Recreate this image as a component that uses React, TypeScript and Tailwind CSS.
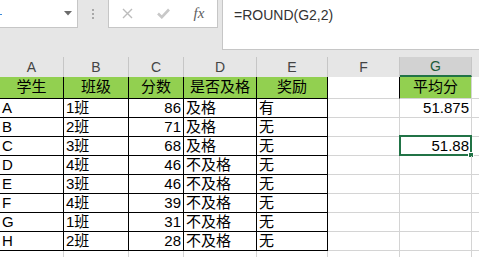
import React from "react";

type Row = string[];

const rows: Row[] = [
  ["A", "1班", "86", "及格", "有"],
  ["B", "2班", "71", "及格", "无"],
  ["C", "3班", "68", "及格", "无"],
  ["D", "4班", "46", "不及格", "无"],
  ["E", "3班", "46", "不及格", "无"],
  ["F", "4班", "39", "不及格", "无"],
  ["G", "1班", "31", "不及格", "无"],
  ["H", "2班", "28", "不及格", "无"],
];

const widths = ["w-[64px]", "w-[65px]", "w-[55px]", "w-[73px]", "w-[71px]", "w-[72px]", "w-[72px]", "w-[40px]"];
// H 列只露出一小截，字母不在画面内
const letters = ["A", "B", "C", "D", "E", "F", "G", ""];
const titles = ["学生", "班级", "分数", "是否及格", "奖励"];

// 平均分 column, keyed by data row index
const avg: Record<number, string> = { 0: "51.875", 2: "51.88" };

function XIcon() {
  return (
    <svg width="11" height="11" viewBox="0 0 11 11">
      <path d="M1 1 L10 10 M10 1 L1 10" stroke="#bcbcbc" strokeWidth="1.4" fill="none" />
    </svg>
  );
}

function CheckIcon() {
  return (
    <svg width="13" height="11" viewBox="0 0 13 11">
      <path d="M1 5.5 L4.8 9.2 L12 1.5" stroke="#c8c8c8" strokeWidth="2.6" fill="none" />
    </svg>
  );
}

function Toolbar() {
  return (
    <div className="h-[57px] bg-[#e6e6e6] flex items-start">
      {/* 名称框 */}
      <div className="relative w-[78px] h-[28px] bg-white border-r border-b border-[#c6c6c6] flex items-center justify-end pr-[5px]">
        <span className="absolute left-0 top-[14px] w-[2px] h-[1px] bg-[#3b8bd9]" />
        <svg width="8" height="5" viewBox="0 0 8 5">
          <path d="M0 0 L8 0 L4 4.5 Z" fill="#6b6b6b" />
        </svg>
      </div>
      <div className="w-[30px] h-[28px] flex flex-col items-center pt-[9px] gap-[2px]">
        <span className="w-[2px] h-[2px] bg-[#a8a8a8]" />
        <span className="w-[2px] h-[2px] bg-[#a8a8a8]" />
        <span className="w-[2px] h-[2px] bg-[#a8a8a8]" />
      </div>
      {/* 取消 / 输入 / 插入函数 */}
      <div className="w-[110px] h-[28px] bg-white border-l border-r border-b border-[#c6c6c6] flex items-center pl-[8px] gap-[16px]">
        <div className="w-[20px] flex justify-center"><XIcon /></div>
        <div className="w-[20px] flex justify-center"><CheckIcon /></div>
        <div className="w-[20px] flex justify-center font-['Liberation_Serif',serif] italic text-[15px] text-[#5e5e5e] leading-none">fx</div>
      </div>
      <div className="w-[4px]" />
      {/* 编辑栏 */}
      <div className="flex-1 h-[50px] bg-white border-l border-b border-[#c6c6c6] pl-[11px] pt-[6px] text-[14px] leading-[18px] text-[#333]">
        =ROUND(G2,2)
      </div>
    </div>
  );
}

function ColumnHeaders() {
  return (
    <div className="h-[20px] flex bg-[#e6e6e6] text-[14px] text-[#444]">
      {letters.map((l, i) => (
        <div
          key={i}
          className={`${widths[i]} shrink-0 h-full flex items-center justify-center border-r ${
            i === 6 ? "bg-[#d2d2d2] border-b-2 border-b-[#217346] border-r-[#c6c6c6] text-[#1d5c3a]" : "border-[#c6c6c6]"
          }`}
        >
          {l}
        </div>
      ))}
    </div>
  );
}

function TitleRow() {
  return (
    <div className="h-[22px] flex text-[15px] text-black">
      {titles.map((t, i) => (
        <div key={t} className={`${widths[i]} shrink-0 bg-[#92d050] border-r border-b border-black flex items-center justify-center`}>
          {t}
        </div>
      ))}
      <div className={`${widths[5]} shrink-0 border-r border-r-black border-b border-b-[#d4d4d4]`} />
      <div className={`${widths[6]} shrink-0 bg-[#92d050] border-r border-b border-[#d4d4d4] flex items-center justify-center`}>
        平均分
      </div>
      <div className={`${widths[7]} shrink-0 border-b border-[#d4d4d4]`} />
    </div>
  );
}

function DataRow({ row, index }: { row: Row; index: number }) {
  const value = avg[index];
  const selected = index === 2;
  return (
    <div className="h-[19px] flex text-[15px] text-black leading-[18px]">
      <div className={`${widths[0]} shrink-0 border-r border-b border-black pl-[2px] flex items-center`}>{row[0]}</div>
      <div className={`${widths[1]} shrink-0 border-r border-b border-black pl-[2px] flex items-center`}>{row[1]}</div>
      <div className={`${widths[2]} shrink-0 border-r border-b border-black pr-[2px] flex items-center justify-end`}>{row[2]}</div>
      <div className={`${widths[3]} shrink-0 border-r border-b border-black pl-[2px] flex items-center`}>{row[3]}</div>
      <div className={`${widths[4]} shrink-0 border-r border-b border-black pl-[2px] flex items-center`}>{row[4]}</div>
      <div className={`${widths[5]} shrink-0 border-r border-b border-[#d4d4d4]`} />
      <div className={`${widths[6]} shrink-0 relative border-r border-b border-[#d4d4d4] pr-[2px] flex items-center justify-end`}>
        {value}
        {selected && (
          <>
            <span className="absolute -left-[1px] -top-[2px] -right-[1px] -bottom-[1px] border-2 border-[#217346]" />
            <span className="absolute -right-[3px] -bottom-[3px] w-[6px] h-[6px] bg-[#217346] border border-white" />
          </>
        )}
      </div>
      <div className={`${widths[7]} shrink-0 border-b border-[#d4d4d4]`} />
    </div>
  );
}

function TailRow() {
  return (
    <div className="h-[19px] flex">
      {widths.map((w, i) => (
        <div key={i} className={`${w} shrink-0 ${i < 7 ? "border-r" : ""} border-[#d4d4d4]`} />
      ))}
    </div>
  );
}

export default function App() {
  return (
    <div className="w-[479px] h-[257px] overflow-hidden bg-white font-['Liberation_Sans','Noto_Sans_CJK_SC',sans-serif]">
      <Toolbar />
      <ColumnHeaders />
      <TitleRow />
      {rows.map((r, i) => (
        <DataRow key={r[0]} row={r} index={i} />
      ))}
      <TailRow />
    </div>
  );
}
